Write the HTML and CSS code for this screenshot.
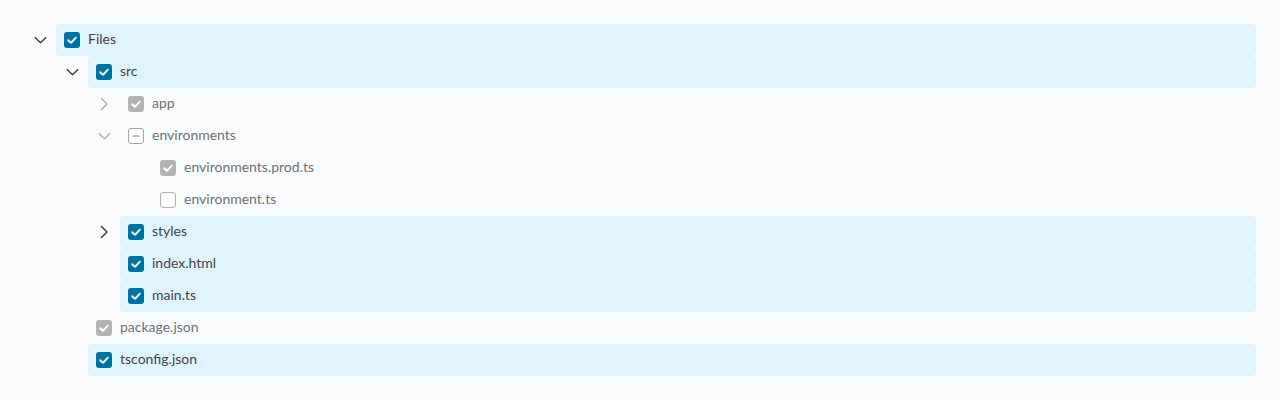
FILE: index.html
```html
<!DOCTYPE html>
<html>
<head>
<meta charset="utf-8">
<link rel="stylesheet" href="styles.css">
</head>
<body>
<div class="tree">
  <div class="node">
    <div class="line">
      <span class="caret open"><svg viewBox="0 0 16 16"><polyline points="2.5,5.5 8,11 13.5,5.5"/></svg></span>
      <div class="row selected"><span class="cb checked"><svg viewBox="0 0 16 16"><polyline points="4.2,8.2 7,10.8 11.8,5.6"/></svg></span><span class="label">Files</span></div>
    </div>
    <div class="children">
      <div class="node">
        <div class="line">
          <span class="caret open"><svg viewBox="0 0 16 16"><polyline points="2.5,5.5 8,11 13.5,5.5"/></svg></span>
          <div class="row selected"><span class="cb checked"><svg viewBox="0 0 16 16"><polyline points="4.2,8.2 7,10.8 11.8,5.6"/></svg></span><span class="label">src</span></div>
        </div>
        <div class="children">
          <div class="node">
            <div class="line">
              <span class="caret disabled"><svg viewBox="0 0 16 16"><polyline points="5.5,2.5 11,8 5.5,13.5"/></svg></span>
              <div class="row"><span class="cb checked grey"><svg viewBox="0 0 16 16"><polyline points="4.2,8.2 7,10.8 11.8,5.6"/></svg></span><span class="label dim">app</span></div>
            </div>
          </div>
          <div class="node">
            <div class="line">
              <span class="caret open disabled"><svg viewBox="0 0 16 16"><polyline points="2.5,5.5 8,11 13.5,5.5"/></svg></span>
              <div class="row"><span class="cb indet"><svg viewBox="0 0 16 16"><line x1="4.5" y1="8" x2="11.5" y2="8"/></svg></span><span class="label dim">environments</span></div>
            </div>
            <div class="children">
              <div class="node">
                <div class="line">
                  <span class="caret empty"></span>
                  <div class="row"><span class="cb checked grey"><svg viewBox="0 0 16 16"><polyline points="4.2,8.2 7,10.8 11.8,5.6"/></svg></span><span class="label dim">environments.prod.ts</span></div>
                </div>
              </div>
              <div class="node">
                <div class="line">
                  <span class="caret empty"></span>
                  <div class="row"><span class="cb empty-box"></span><span class="label dim">environment.ts</span></div>
                </div>
              </div>
            </div>
          </div>
          <div class="node">
            <div class="line">
              <span class="caret"><svg viewBox="0 0 16 16"><polyline points="5.5,2.5 11,8 5.5,13.5"/></svg></span>
              <div class="row selected"><span class="cb checked"><svg viewBox="0 0 16 16"><polyline points="4.2,8.2 7,10.8 11.8,5.6"/></svg></span><span class="label">styles</span></div>
            </div>
          </div>
          <div class="node">
            <div class="line">
              <span class="caret empty"></span>
              <div class="row selected"><span class="cb checked"><svg viewBox="0 0 16 16"><polyline points="4.2,8.2 7,10.8 11.8,5.6"/></svg></span><span class="label">index.html</span></div>
            </div>
          </div>
          <div class="node">
            <div class="line">
              <span class="caret empty"></span>
              <div class="row selected"><span class="cb checked"><svg viewBox="0 0 16 16"><polyline points="4.2,8.2 7,10.8 11.8,5.6"/></svg></span><span class="label">main.ts</span></div>
            </div>
          </div>
        </div>
      </div>
      <div class="node">
        <div class="line">
          <span class="caret empty"></span>
          <div class="row"><span class="cb checked grey"><svg viewBox="0 0 16 16"><polyline points="4.2,8.2 7,10.8 11.8,5.6"/></svg></span><span class="label dim">package.json</span></div>
        </div>
      </div>
      <div class="node">
        <div class="line">
          <span class="caret empty"></span>
          <div class="row selected"><span class="cb checked"><svg viewBox="0 0 16 16"><polyline points="4.2,8.2 7,10.8 11.8,5.6"/></svg></span><span class="label">tsconfig.json</span></div>
        </div>
      </div>
    </div>
  </div>
</div>
</body>
</html>
```

FILE: styles.css
```css
html, body {
  margin: 0;
  padding: 0;
  background: #fafcfd;
}
body {
  font-family: Lato, "Open Sans", sans-serif;
  font-size: 14px;
  color: #454545;
}
.tree {
  padding: 24px 24px 0 24px;
}
.line {
  display: flex;
  align-items: center;
  height: 32px;
}
.caret {
  width: 32px;
  height: 32px;
  flex: none;
  display: flex;
  align-items: center;
  justify-content: center;
}
.caret svg {
  width: 16px;
  height: 16px;
  fill: none;
  stroke: #454545;
  stroke-width: 1.6;
  stroke-linecap: round;
  stroke-linejoin: round;
}
.caret.open svg {
  width: 15px;
}
.caret.disabled svg {
  stroke: #b3b3b3;
}
.row {
  flex: 1;
  height: 32px;
  display: flex;
  align-items: center;
  padding-left: 8px;
  gap: 8px;
  border-radius: 4px;
}
.row.selected {
  background: #dff4fd;
}
.children {
  margin-left: 32px;
}
.cb {
  width: 16px;
  height: 16px;
  box-sizing: border-box;
  border-radius: 3px;
  flex: none;
  display: flex;
  align-items: center;
  justify-content: center;
}
.cb svg {
  width: 16px;
  height: 16px;
  fill: none;
  stroke: #ffffff;
  stroke-width: 1.9;
  stroke-linecap: round;
  stroke-linejoin: round;
}
.cb.checked {
  background: #0072a3;
}
.cb.checked.grey {
  background: #b3b3b3;
}
.cb.indet {
  border: 1px solid #a6a6a6;
  background: #ffffff;
}
.cb.indet svg {
  width: 14px;
  height: 14px;
  stroke: #8c8c8c;
  stroke-width: 1.4;
}
.cb.empty-box {
  border: 1px solid #b3b3b3;
  background: #ffffff;
}
.label {
  line-height: 20px;
  padding-bottom: 2px;
  color: #454545;
}
.label.dim {
  color: #6b737a;
}
```
